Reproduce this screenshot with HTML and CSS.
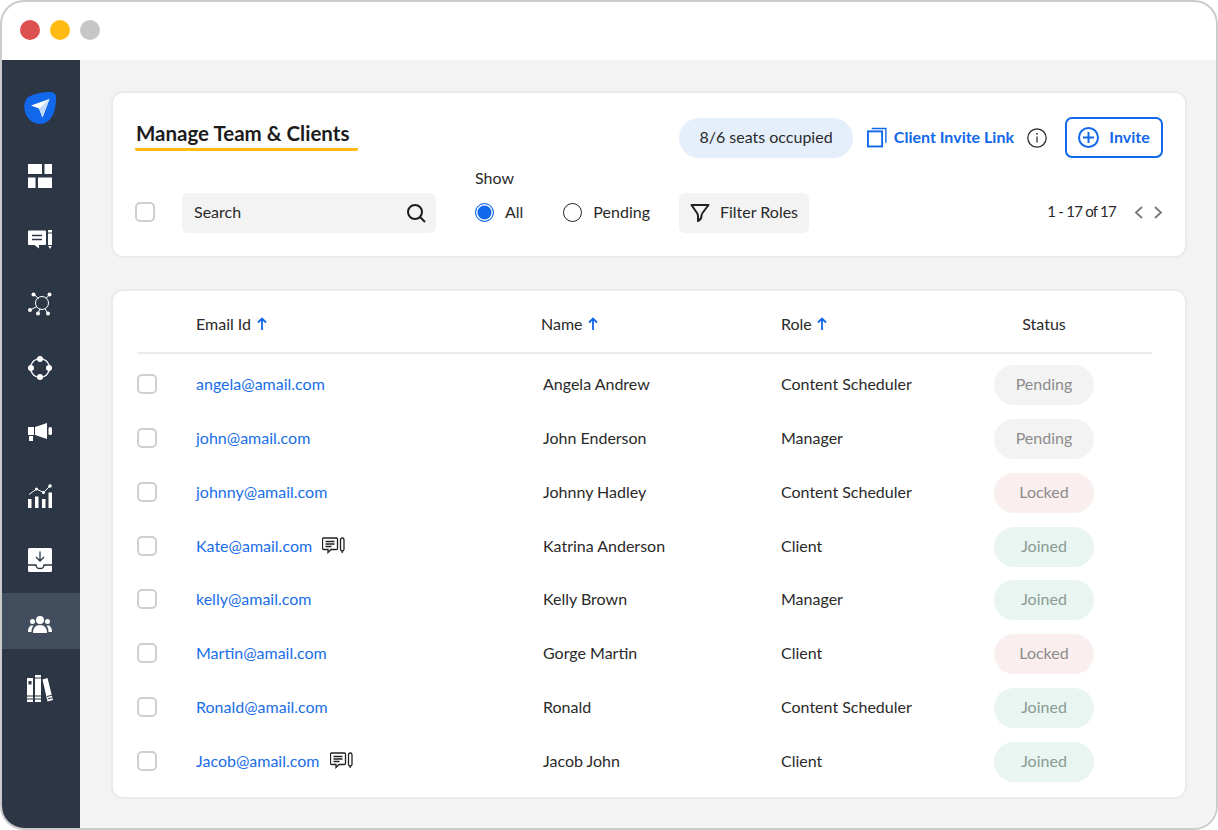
FILE: index.html
```html
<!DOCTYPE html>
<html lang="en">
<head>
<meta charset="utf-8">
<title>Manage Team &amp; Clients</title>
<link rel="stylesheet" href="styles.css">
</head>
<body>
<div class="frame">
  <header class="titlebar">
    <span class="dot dot-red"></span><span class="dot dot-yellow"></span><span class="dot dot-grey"></span>
  </header>
  <div class="app">
    <nav class="sidebar">
      <div class="nav-logo">
        <svg width="32" height="32" viewBox="0 0 32 32"><path fill="#1268ea" d="M6 4C12 1.500 20 0 26 0c4 0 6 2 6 6 0 8-1.500 15-5 20-3 4-7 6-11 6C9 32 3 27 1 20-1 13 1 6.500 6 4z"/><path fill="#fff" d="M7 13.500 25.500 7 18.500 25.500 15 16.500z"/><path fill="#c4daf9" d="M15 16.500 25.500 7 18.500 25.500z"/></svg>
      </div>
      <a class="nav-item"><svg width="24" height="24" viewBox="0 0 24 24" fill="#fff"><rect width="14" height="10"/><rect x="16.500" width="7.500" height="10"/><rect y="13.500" width="7.500" height="10.500"/><rect x="10" y="13.500" width="14" height="10.500"/></svg></a>
      <a class="nav-item"><svg width="24" height="20" viewBox="0 0 24 20"><path fill="#fff" d="M1 .5h16a1 1 0 0 1 1 1V14a1 1 0 0 1-1 1h-6v3.500L6.500 15H1a1 1 0 0 1-1-1V1.500a1 1 0 0 1 1-1z"/><path stroke="#2c3645" stroke-width="1.500" d="M4 5.500h10M4 9.500h10"/><path fill="#fff" d="M20 0h4v2.500h-4zM20 3.500h4V15h-4zM20.300 16h3.400L22 19z"/></svg></a>
      <a class="nav-item"><svg width="24" height="24" viewBox="0 0 24 24" fill="#fff" stroke="#fff"><g fill="none" stroke-width="1"><circle cx="14" cy="11" r="6.500"/><path d="M6 2 10.500 7M22 2 18 6.500M2 18l7-3.500M10 22l2-5.500M20 22l-3-5.500"/></g><g stroke="none"><circle cx="5.500" cy="2.500" r="2"/><circle cx="21.500" cy="2.500" r="2"/><circle cx="2" cy="18" r="2"/><circle cx="10" cy="21.500" r="2"/><circle cx="20" cy="21.500" r="2"/></g></svg></a>
      <a class="nav-item"><svg width="24" height="24" viewBox="0 0 24 24"><circle cx="12" cy="12" r="9.500" fill="none" stroke="#fff" stroke-width="1.200"/><g fill="#fff"><circle cx="12" cy="3" r="3"/><circle cx="12" cy="21" r="3"/><circle cx="3" cy="12" r="3"/><circle cx="21" cy="12" r="3"/></g></svg></a>
      <a class="nav-item"><svg width="24" height="18" viewBox="0 0 24 18" fill="#fff"><path d="M0 4h6v8H0zM1 13h4v5H1zM7 4l12-4v16L7 12z"/><rect x="20.500" y="4" width="3.500" height="8" rx="1.500"/></svg></a>
      <a class="nav-item"><svg width="24" height="24" viewBox="0 0 24 24" fill="#fff"><rect y="15" width="3.500" height="9"/><rect x="7" y="12.500" width="3.500" height="11.500"/><rect x="14" y="15" width="3.500" height="9"/><rect x="20.500" y="8.500" width="3.500" height="15.500"/><path fill="none" stroke="#fff" stroke-width="1" d="M1 10.500 8.500 5l7 3.500L22 2"/><circle cx="8.500" cy="5" r="1.500"/><circle cx="15.500" cy="8.500" r="1.500"/><circle cx="22" cy="2" r="1.800"/></svg></a>
      <a class="nav-item"><svg width="24" height="24" viewBox="0 0 24 24"><rect width="24" height="24" rx="1.500" fill="#fff"/><path fill="none" stroke="#2c3645" stroke-width="1.300" d="M12 3.500v9M8 9l4 4 4-4M0 17h8c0 3 1.500 3.500 4 3.500s4-.5 4-3.500h8"/></svg></a>
      <a class="nav-item active"><svg width="24" height="17" viewBox="0 0 24 17" fill="#fff"><circle cx="12" cy="4" r="4"/><path d="M5 17c0-5 2.500-8 7-8s7 3 7 8z"/><circle cx="4.500" cy="5.500" r="2.500"/><circle cx="19.500" cy="5.500" r="2.500"/><path d="M0 16c0-4 1.500-6.500 4-6.500 .6 0 1 .1 1.500.3C4 11.500 3.500 13.500 3.500 16zM24 16c0-4-1.500-6.500-4-6.500-.6 0-1 .1-1.500.3 1.500 1.700 2 3.700 2 6.200z"/></svg></a>
      <a class="nav-item"><svg width="26" height="27" viewBox="0 0 26 27" fill="#fff"><path d="M0 3h6v24H0z"/><path d="M8 0h6v27H8z"/><path d="M15.500 4.500 20.500 3l5.500 22-5.500 1.500z"/><path stroke="#2c3645" stroke-width="1" d="M0 21h6M0 24h6M8 3h6M8 21h6M8 24h6M20 21.500l5-1.300M20.800 24l5-1.300"/><rect x="1.500" y="6" width="3" height="3.500" fill="#2c3645"/></svg></a>
    </nav>
    <main class="content">
      <section class="panel toolbar">
        <div class="toolbar-top">
          <h1 class="page-title">Manage Team &amp; Clients</h1>
          <div class="actions">
            <span class="seats">8/6 seats occupied</span>
            <a class="invite-link">
              <svg width="21" height="21" viewBox="0 0 21 21" fill="none" stroke="#1268ea" stroke-width="2"><rect x="1" y="4" width="15" height="16"/><path stroke-width="1.500" d="M5 1h15v15"/></svg>
              <span class="raised">Client Invite Link</span>
            </a>
            <svg class="info" width="20" height="20" viewBox="0 0 20 20" fill="none" stroke="#222" stroke-width="1.200"><circle cx="10" cy="10" r="9.200"/><path d="M10 8.500v6"/><path stroke-width="1.600" d="M10 5v1.500"/></svg>
            <button class="invite-btn">
              <svg width="21" height="21" viewBox="0 0 21 21" fill="none" stroke="#1268ea" stroke-width="2"><circle cx="10.500" cy="10.500" r="9.500"/><path d="M10.500 5v11M5 10.500h11"/></svg>
              <span class="raised">Invite</span>
            </button>
          </div>
        </div>
        <div class="toolbar-bottom">
          <span class="check check-top"></span>
          <div class="search">
            <span class="raised">Search</span>
            <svg width="20" height="20" viewBox="0 0 20 20" fill="none" stroke="#1c1c1c" stroke-width="2"><circle cx="9" cy="9" r="7"/><path d="M14 14l5 5"/></svg>
          </div>
          <div class="show">
            <div class="show-label">Show</div>
            <div class="radios">
              <label class="radio"><span class="radio-mark on"></span><span class="radio-text">All</span></label>
              <label class="radio"><span class="radio-mark"></span><span class="radio-text">Pending</span></label>
            </div>
          </div>
          <div class="filter">
            <svg width="20" height="20" viewBox="0 0 20 20" fill="none" stroke="#222" stroke-width="2" stroke-linejoin="round"><path d="M1.500 2h17l-6 8c-.8 1-1 2-1 3 0 1.500-1.500 4-3.500 5V13c0-1-.4-2-1-3z"/></svg>
            <span class="raised">Filter Roles</span>
          </div>
          <div class="pager">
            <span class="pager-text">1 - 17 of 17</span>
            <svg class="chev-prev" width="9" height="13" viewBox="0 0 9 13" fill="none" stroke="#777" stroke-width="1.800"><path d="M8 1 2 6.500 8 12"/></svg>
            <svg class="chev-next" width="9" height="13" viewBox="0 0 9 13" fill="none" stroke="#777" stroke-width="1.800"><path d="M1 1l6 5.500L1 12"/></svg>
          </div>
        </div>
      </section>
      <section class="panel table-panel">
        <div class="thead">
          <span></span>
          <span class="th">Email Id <svg width="10" height="13" viewBox="0 0 10 13" fill="none" stroke="#1268ea" stroke-width="1.800"><path d="M5 13V1.500M1 5.500l4-4 4 4"/></svg></span>
          <span class="th">Name <svg width="10" height="13" viewBox="0 0 10 13" fill="none" stroke="#1268ea" stroke-width="1.800"><path d="M5 13V1.500M1 5.500l4-4 4 4"/></svg></span>
          <span class="th">Role <svg width="10" height="13" viewBox="0 0 10 13" fill="none" stroke="#1268ea" stroke-width="1.800"><path d="M5 13V1.500M1 5.500l4-4 4 4"/></svg></span>
          <span class="th th-status">Status</span>
        </div>
        <div class="tbody">
          <div class="row"><span class="check"></span><span class="email"><a>angela@amail.com</a></span><span>Angela Andrew</span><span>Content Scheduler</span><span class="pill pending">Pending</span></div>
          <div class="row"><span class="check"></span><span class="email"><a>john@amail.com</a></span><span>John Enderson</span><span>Manager</span><span class="pill pending">Pending</span></div>
          <div class="row"><span class="check"></span><span class="email"><a>johnny@amail.com</a></span><span>Johnny Hadley</span><span>Content Scheduler</span><span class="pill locked">Locked</span></div>
          <div class="row"><span class="check"></span><span class="email"><a>Kate@amail.com</a><svg class="note" width="23" height="17" viewBox="0 0 23 17" fill="none" stroke="#222" stroke-width="1.300"><path d="M1.500 1h13a1 1 0 0 1 1 1v9.500a1 1 0 0 1-1 1H9L6 15.500V12.500H1.500a1 1 0 0 1-1-1V2a1 1 0 0 1 1-1z"/><path d="M3.500 4.500h9M3.500 7h9M3.500 9.500h6"/><rect x="18.500" y="1" width="3.500" height="13" rx="1.700"/><path d="M20.200 14v2"/></svg></span><span>Katrina Anderson</span><span>Client</span><span class="pill joined">Joined</span></div>
          <div class="row"><span class="check"></span><span class="email"><a>kelly@amail.com</a></span><span>Kelly Brown</span><span>Manager</span><span class="pill joined">Joined</span></div>
          <div class="row"><span class="check"></span><span class="email"><a>Martin@amail.com</a></span><span>Gorge Martin</span><span>Client</span><span class="pill locked">Locked</span></div>
          <div class="row"><span class="check"></span><span class="email"><a>Ronald@amail.com</a></span><span>Ronald</span><span>Content Scheduler</span><span class="pill joined">Joined</span></div>
          <div class="row"><span class="check"></span><span class="email"><a>Jacob@amail.com</a><svg class="note" width="23" height="17" viewBox="0 0 23 17" fill="none" stroke="#222" stroke-width="1.300"><path d="M1.500 1h13a1 1 0 0 1 1 1v9.500a1 1 0 0 1-1 1H9L6 15.500V12.500H1.500a1 1 0 0 1-1-1V2a1 1 0 0 1 1-1z"/><path d="M3.500 4.500h9M3.500 7h9M3.500 9.500h6"/><rect x="18.500" y="1" width="3.500" height="13" rx="1.700"/><path d="M20.200 14v2"/></svg></span><span>Jacob John</span><span>Client</span><span class="pill joined">Joined</span></div>
        </div>
      </section>
    </main>
  </div>
</div>
</body>
</html>
```

FILE: styles.css
```css
* { box-sizing: border-box; }
html, body { margin: 0; padding: 0; background: #fff; }
body { font-family: "Lato", "Liberation Sans", sans-serif; font-size: 16px; color: #2a2a2a; }

.frame {
  width: 1218px;
  height: 830px;
  border: 2px solid #cbcbcb;
  border-radius: 24px;
  overflow: hidden;
  display: flex;
  flex-direction: column;
  background: #fff;
}

.titlebar { height: 58px; flex: none; display: flex; align-items: center; gap: 10px; padding: 0 0 2px 18px; }
.dot { width: 20px; height: 20px; border-radius: 50%; }
.dot-red { background: #dd5050; }
.dot-yellow { background: #ffbb12; }
.dot-grey { background: #c6c6c6; }

.app { flex: 1; display: flex; min-height: 0; }

.sidebar { width: 78px; flex: none; background: #2c3645; display: flex; flex-direction: column; align-items: stretch; padding-top: 32px; }
.nav-logo { height: 32px; display: flex; justify-content: center; margin-bottom: 21px; padding-right: 2px; }
.nav-item { height: 56px; margin-bottom: 8px; display: flex; align-items: center; justify-content: center; padding: 6px 2px 0 0; }
.nav-item.active { background: #424e5e; }

.content { flex: 1; background: #f3f3f3; padding: 31px 29px 0 31px; display: flex; flex-direction: column; gap: 31px; }

.panel { background: #fff; border: 2px solid #ebebeb; border-radius: 12px; }

.raised { padding-bottom: 2px; }

.toolbar { height: 167px; padding: 23px 22px 0 22px; display: flex; flex-direction: column; }
.toolbar-top { display: flex; justify-content: space-between; align-items: flex-start; height: 52px; }
.page-title { margin: -1px 0 0; padding: 6px 8px 3px 1px; font-size: 20.500px; line-height: 24px; font-weight: 700; color: #1c1c1c; border-bottom: 3px solid #ffbb12; border-radius: 2px; min-width: 223px; }
.actions { display: flex; align-items: center; height: 41px; margin-top: 1px; }
.seats { width: 174px; height: 40px; background: #e5effc; border-radius: 20px; display: flex; align-items: center; justify-content: center; margin-right: 14px; padding-bottom: 2px; }
.invite-link { color: #1268ea; font-weight: 700; display: flex; align-items: center; gap: 7px; width: 147px; white-space: nowrap; }
.info { margin: 0 18px 0 13px; }
.invite-btn { width: 98px; height: 41px; border: 2px solid #1268ea; border-radius: 7px; background: #fff; color: #1268ea; font: 700 16px "Lato", "Liberation Sans", sans-serif; display: flex; align-items: center; justify-content: center; gap: 10px; padding: 0; }

.toolbar-bottom { display: flex; align-items: flex-end; }
.toolbar-bottom .raised { padding-bottom: 4px; }
.check { width: 20px; height: 20px; border: 2px solid #cfcfcf; border-radius: 5px; background: #fff; flex: none; display: block; }
.check-top { margin: 0 27px 11px 0; }
.search { width: 254px; height: 40px; background: #f3f3f3; border-radius: 6px; display: flex; align-items: center; justify-content: space-between; padding: 0 10px 0 12px; margin-right: 39px; }
.show { width: 204px; }
.show-label { height: 25px; line-height: 20px; }
.radios { height: 40px; display: flex; align-items: center; gap: 40px; padding-bottom: 2px; }
.radio { display: flex; align-items: center; gap: 11px; }
.radio-text { padding-bottom: 2px; }
.radio-mark { width: 19px; height: 19px; border-radius: 50%; border: 1.500px solid #222; background: #fff; display: block; }
.radio-mark.on { border-color: #1268ea; background: #1268ea; box-shadow: inset 0 0 0 1.500px #fff; }
.filter { width: 130px; height: 40px; background: #f3f3f3; border-radius: 6px; display: flex; align-items: center; justify-content: center; gap: 10px; }
.pager { margin-left: auto; height: 40px; display: flex; align-items: center; padding-bottom: 2px; }
.pager-text { font-size: 15px; letter-spacing: -0.750px; padding-bottom: 2px; }
.chev-prev { margin-left: 18px; }
.chev-next { margin-left: 11px; }

.table-panel { height: 510px; padding: 0 33px 0 24px; }
.thead { height: 63px; display: grid; grid-template-columns: 59px 345px 240px 213px 100px; align-items: center; border-bottom: 2px solid #ebebeb; padding-top: 3px; }
.th { display: flex; align-items: center; gap: 5.500px; }
.th-status { justify-content: center; }
.tbody { padding-top: 4px; }
.row { height: 53.860px; display: grid; grid-template-columns: 59px 347px 238px 213px 100px; align-items: center; }
.row > span { padding-bottom: 3px; }
.row > .check { padding-bottom: 0; margin-bottom: 2px; }
.email { display: flex; align-items: center; gap: 10px; }
.email a { color: #1a6ee8; }
.pill { width: 100px; height: 40px; border-radius: 20px; display: flex; align-items: center; justify-content: center; }
.pending { background: #f3f3f3; color: #8c8c8c; }
.locked { background: #fbeeee; color: #8c8c8c; }
.joined { background: #e9f5f1; color: #8a9a94; }
```
